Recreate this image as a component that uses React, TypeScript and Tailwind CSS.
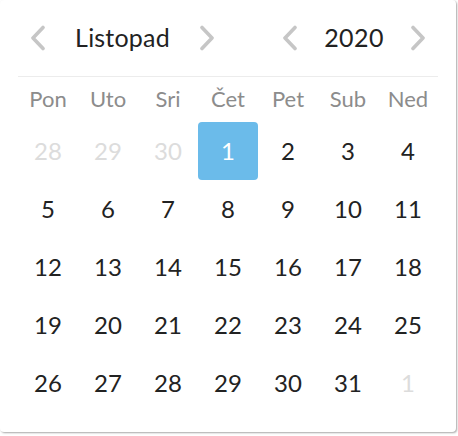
const weekdays = ['Pon', 'Uto', 'Sri', 'Čet', 'Pet', 'Sub', 'Ned'];

type Day = { n: number; muted?: boolean; selected?: boolean };

function buildDays(): Day[] {
  const days: Day[] = [28, 29, 30].map((n) => ({ n, muted: true }));
  for (let i = 1; i <= 31; i++) days.push({ n: i, selected: i === 1 });
  days.push({ n: 1, muted: true });
  return days;
}

function Arrow({ dir }: { dir: 'left' | 'right' }) {
  const points = dir === 'left' ? '13,2.5 3,13 13,23.5' : '3,2.5 13,13 3,23.5';
  return (
    <button type="button" className="flex h-[26px] w-4 items-center justify-center">
      <svg width="16" height="26" viewBox="0 0 16 26" fill="none">
        <polyline points={points} stroke="#c6c6c6" strokeWidth="3.6" strokeLinecap="round" strokeLinejoin="round" />
      </svg>
    </button>
  );
}

export default function App() {
  const days = buildDays();

  return (
    <div className="h-[436px] w-[458px] bg-white" style={{ fontFamily: 'Lato, "Open Sans", sans-serif' }}>
      <div className="h-[432px] w-[456px] rounded-[4px] bg-white shadow-[1px_1px_2px_rgba(0,0,0,0.35)]">
        <div className="flex h-[76px] items-center justify-between px-[30px]">
          <div className="flex w-[185px] items-center justify-between">
            <Arrow dir="left" />
            <span className="text-[25px] tracking-[0.2px] text-[#222]">Listopad</span>
            <Arrow dir="right" />
          </div>
          <div className="flex w-[144px] items-center justify-between">
            <Arrow dir="left" />
            <span className="text-[25px] tracking-[0.4px] text-[#222]">2020</span>
            <Arrow dir="right" />
          </div>
        </div>
        <div className="mx-[18px] border-t border-[#ececec]">
          <div className="grid h-[45px] grid-cols-7 items-center pb-[3px]">
            {weekdays.map((w) => (
              <span key={w} className="text-center text-[22px] text-[#8c8c8c]">
                {w}
              </span>
            ))}
          </div>
          <div className="grid grid-cols-7">
            {days.map((d, i) => (
              <div
                key={i}
                className={
                  d.selected
                    ? 'flex h-[58px] items-center justify-center rounded-[4px] bg-[#6bbbea] text-[24px] text-white'
                    : d.muted
                      ? 'flex h-[58px] items-center justify-center text-[24px] text-[#dcdcdc]'
                      : 'flex h-[58px] items-center justify-center text-[24px] text-[#222]'
                }
              >
                {d.n}
              </div>
            ))}
          </div>
        </div>
      </div>
    </div>
  );
}
